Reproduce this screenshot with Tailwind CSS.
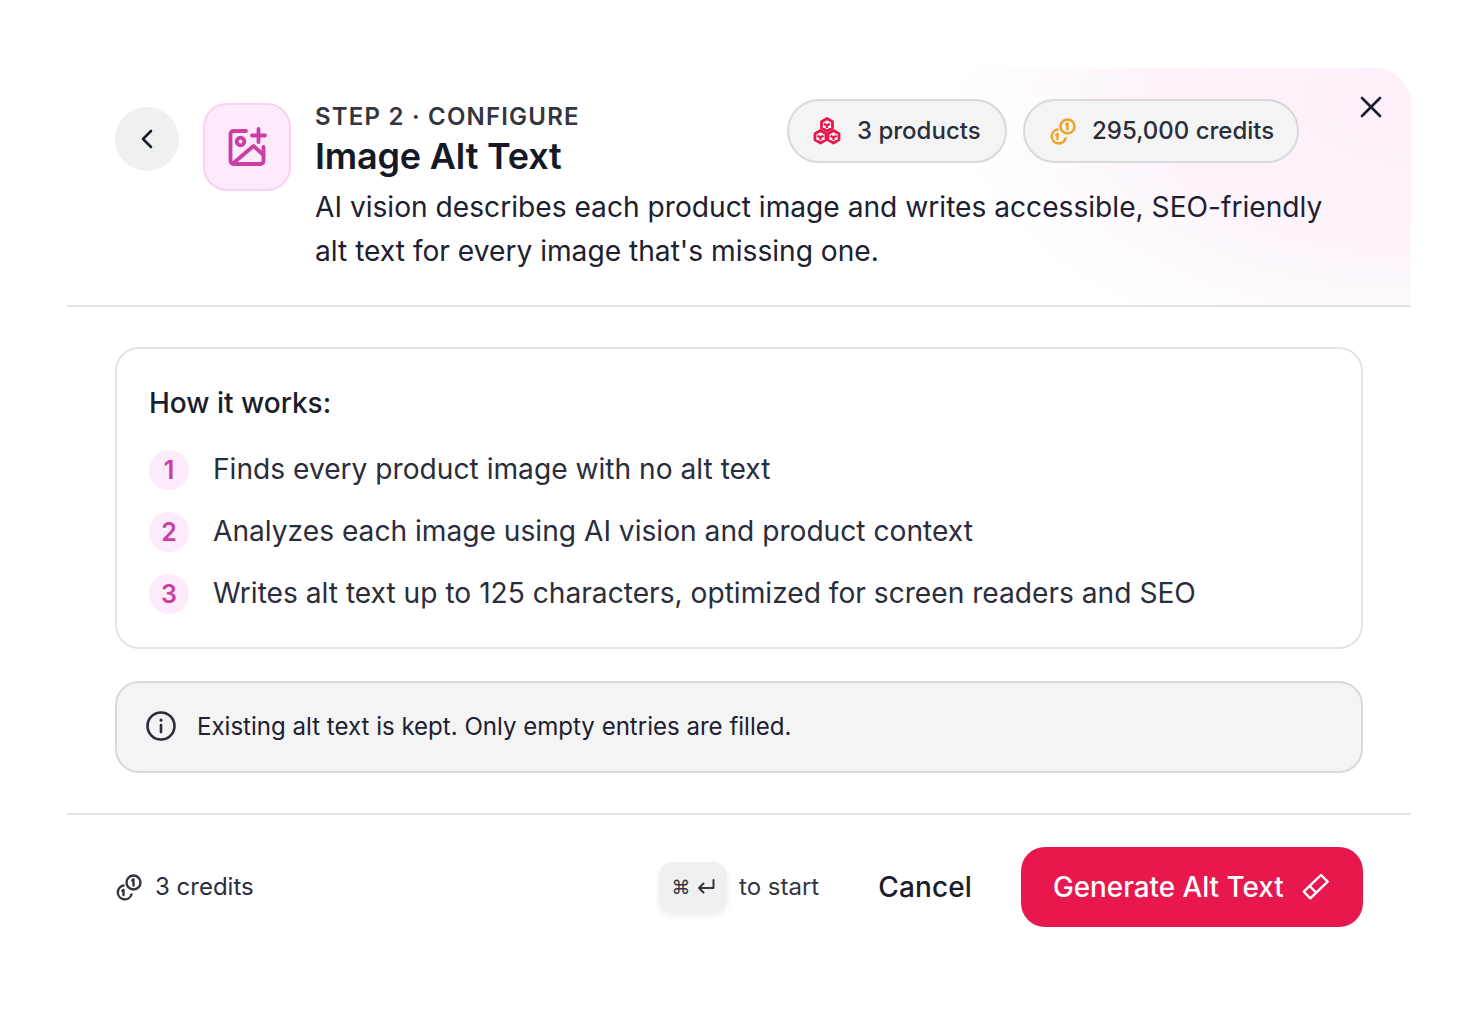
<!DOCTYPE html>
<html>
<head>
<meta charset="UTF-8">
<title>Image Alt Text</title>
<script src="https://cdn.jsdelivr.net/npm/@tailwindcss/browser@4"></script>
</head>
<body class="bg-white font-['Inter',sans-serif] text-[#1a1d2b]">
<div class="pt-[68px] pl-[67px]">
  <div class="w-[1344px]">
    <!-- header -->
    <header class="relative h-[239px] rounded-tr-[36px] border-b-2 border-[#e4e4e6] bg-[radial-gradient(ellipse_460px_260px_at_100%_15%,#fdeffa_0%,#fdf3fb_50%,#ffffff_100%)] pl-12 pt-[31px] flex">
      <button class="mt-[8px] w-16 h-16 rounded-full bg-[#eff0f0] flex items-center justify-center shrink-0">
        <svg width="28" height="28" viewBox="0 0 28 28" fill="none" stroke="#1a1d2b" stroke-width="2.600" stroke-linecap="round" stroke-linejoin="round"><path d="M18 6 10 14l8 8"/></svg>
      </button>
      <div class="ml-6 mt-[4px] w-[88px] h-[88px] rounded-[24px] bg-[#fdeafa] border-2 border-[#fbd0f0] flex items-center justify-center shrink-0">
        <svg width="42" height="42" viewBox="0 0 42 42" fill="none" stroke="#c93fa6" stroke-width="3.800" stroke-linecap="round" stroke-linejoin="round"><path d="M20 5H7.500A3 3 0 0 0 4.500 8v27a3 3 0 0 0 3 3h27a3 3 0 0 0 3-3V21"/><circle cx="14.500" cy="15.500" r="3.800"/><path d="M7.500 37 27.500 20l10 9"/><path d="M32.500 3v13M26 9.500h13"/></svg>
      </div>
      <div class="ml-6 w-[1040px]">
        <div class="flex">
          <div class="w-[472px]">
            <div class="text-[24px] leading-[32px] mt-[2px] font-semibold tracking-[0.05em] text-[#33363f] whitespace-nowrap">STEP 2 · CONFIGURE</div>
            <h1 class="text-[36px] leading-[48px] -mt-[1px] font-semibold tracking-[-0.005em] text-[#141827] whitespace-nowrap">Image Alt Text</h1>
          </div>
          <div class="flex gap-4">
            <div class="h-16 w-[220px] rounded-full border-2 border-[#d9d9da] bg-[#f4f4f5] flex items-center pl-[24px] gap-[16px] text-[24px] font-medium text-[#2a2d3a]">
              <svg width="28" height="28" viewBox="0 0 28 28" fill="none" stroke="#e8174d" stroke-width="2.800" stroke-linejoin="round"><path d="M14 1.500 19.500 4.700v6.200L14 14 8.500 10.900V4.700z"/><path d="M7.500 13.500 13 16.700v6.200L7.500 26 2 22.900v-6.200z"/><path d="M20.500 13.500 26 16.700v6.200L20.500 26 15 22.900v-6.200z"/><path stroke-width="2.200" d="M11 6.800l3 1.700 3-1.700M14 8.500v2.500M4.500 18.800l3 1.700 3-1.700M7.500 20.500V23M17.500 18.800l3 1.700 3-1.700M20.500 20.500V23"/></svg>
              <span>3 products</span>
            </div>
            <div class="h-16 w-[276px] rounded-full border-2 border-[#d9d9da] bg-[#f4f4f5] flex items-center pl-[24px] gap-[15px] text-[24px] font-medium text-[#2a2d3a]">
              <svg width="28" height="28" viewBox="0 0 28 28" fill="none" stroke="#eca52b" stroke-width="2.600" stroke-linecap="round"><circle cx="18.500" cy="9.500" r="7"/><path d="M18.500 6.500v6M17.200 7.300l1.300-.8"/><path d="M8.500 12.500a7 7 0 1 0 8 9"/><path d="M8.500 17v5M7.300 17.800l1.200-.8"/></svg>
              <span>295,000 credits</span>
            </div>
          </div>
        </div>
        <p class="text-[28.15px] leading-[44px] mt-[5px] text-[#1d2030] whitespace-nowrap">AI vision describes each product image and writes accessible, SEO-friendly<br>alt text for every image that's missing one.</p>
      </div>
      <button class="absolute right-[24px] top-[23px]">
        <svg width="32" height="32" viewBox="0 0 32 32" fill="none" stroke="#1a1d2b" stroke-width="2.600" stroke-linecap="round"><path d="M7 7l18 18M25 7 7 25"/></svg>
      </button>
    </header>

    <main class="px-12 pt-[40px]">
      <section class="h-[302px] rounded-[24px] border-2 border-[#e4e4e6] pl-8 pt-[32px]">
        <h2 class="text-[28px] leading-[44px] font-medium text-[#1a1d2b]">How it works:</h2>
        <ol class="mt-[25px] flex flex-col gap-[22px] text-[28.15px] leading-[40px] text-[#2a2d3a]">
          <li class="flex items-center gap-6"><span class="w-10 h-10 rounded-full bg-[#fdeafa] flex items-center justify-center text-[25px] font-semibold text-[#c93fa6]">1</span><span class="-mt-[2px]">Finds every product image with no alt text</span></li>
          <li class="flex items-center gap-6"><span class="w-10 h-10 rounded-full bg-[#fdeafa] flex items-center justify-center text-[25px] font-semibold text-[#c93fa6]">2</span><span class="-mt-[2px]">Analyzes each image using AI vision and product context</span></li>
          <li class="flex items-center gap-6"><span class="w-10 h-10 rounded-full bg-[#fdeafa] flex items-center justify-center text-[25px] font-semibold text-[#c93fa6]">3</span><span class="-mt-[2px]">Writes alt text up to 125 characters, optimized for screen readers and SEO</span></li>
        </ol>
      </section>
      <section class="mt-8 h-[92px] rounded-[24px] border-2 border-[#d9d9da] bg-[#f4f4f5] flex items-center pl-[28px] gap-[20px] text-[24.06px] text-[#1d2030]">
        <svg class="-mt-[3px]" width="32" height="32" viewBox="0 0 32 32" fill="none" stroke="#2a2d3a" stroke-width="2.600" stroke-linecap="round"><circle cx="16" cy="16" r="13.500"/><path d="M16 15v7"/><path d="M16 10v.2" stroke-width="3"/></svg>
        <span>Existing alt text is kept. Only empty entries are filled.</span>
      </section>
    </main>

    <footer class="mt-[40px] border-t-2 border-[#e4e4e6] px-12 pt-[32px] flex items-center">
      <svg width="28" height="28" viewBox="0 0 28 28" fill="none" stroke="#33363f" stroke-width="2.400" stroke-linecap="round"><circle cx="18.500" cy="9.500" r="7"/><path d="M18.500 6.500v6M17.200 7.300l1.300-.8"/><path d="M8.500 12.500a7 7 0 1 0 8 9"/><path d="M8.500 17v5M7.300 17.800l1.200-.8"/></svg>
      <span class="ml-[12px] text-[24px] text-[#2a2d3a]">3 credits</span>
      <div class="ml-auto flex items-center">
        <div class="w-[68px] h-[50px] rounded-[14px] bg-[#f0f0f2] shadow-[0_3px_6px_rgba(0,0,0,0.08)] flex items-center justify-center gap-[6px] text-[#33363f]">
          <span class="text-[19px] font-['DejaVu_Sans',sans-serif]">⌘</span>
          <svg width="18" height="18" viewBox="0 0 18 18" fill="none" stroke="#33363f" stroke-width="2" stroke-linecap="round" stroke-linejoin="round"><path d="M16.500 2v8H2M6.500 5.500 2 10l4.500 4.500"/></svg>
        </div>
        <span class="ml-[12px] text-[24px] text-[#33363f]">to start</span>
        <button class="ml-[59px] text-[28px] font-[450] tracking-[0.005em] text-[#1a1d2b]">Cancel</button>
        <button class="ml-[49px] w-[342px] h-20 rounded-[24px] bg-[#e8174d] text-white text-[27.8px] font-medium flex items-center pl-[32px] gap-[18px]">
          <span class="mt-[1px]">Generate Alt Text</span>
          <svg width="28" height="28" viewBox="0 0 28 28" fill="none" stroke="#fff" stroke-width="2.400" stroke-linejoin="round"><path d="M19 2 25.700 8.700 8.300 25.300 1.700 18.700z"/><path d="M7.500 13 14 19.500"/></svg>
        </button>
      </div>
    </footer>
  </div>
</div>
</body>
</html>
